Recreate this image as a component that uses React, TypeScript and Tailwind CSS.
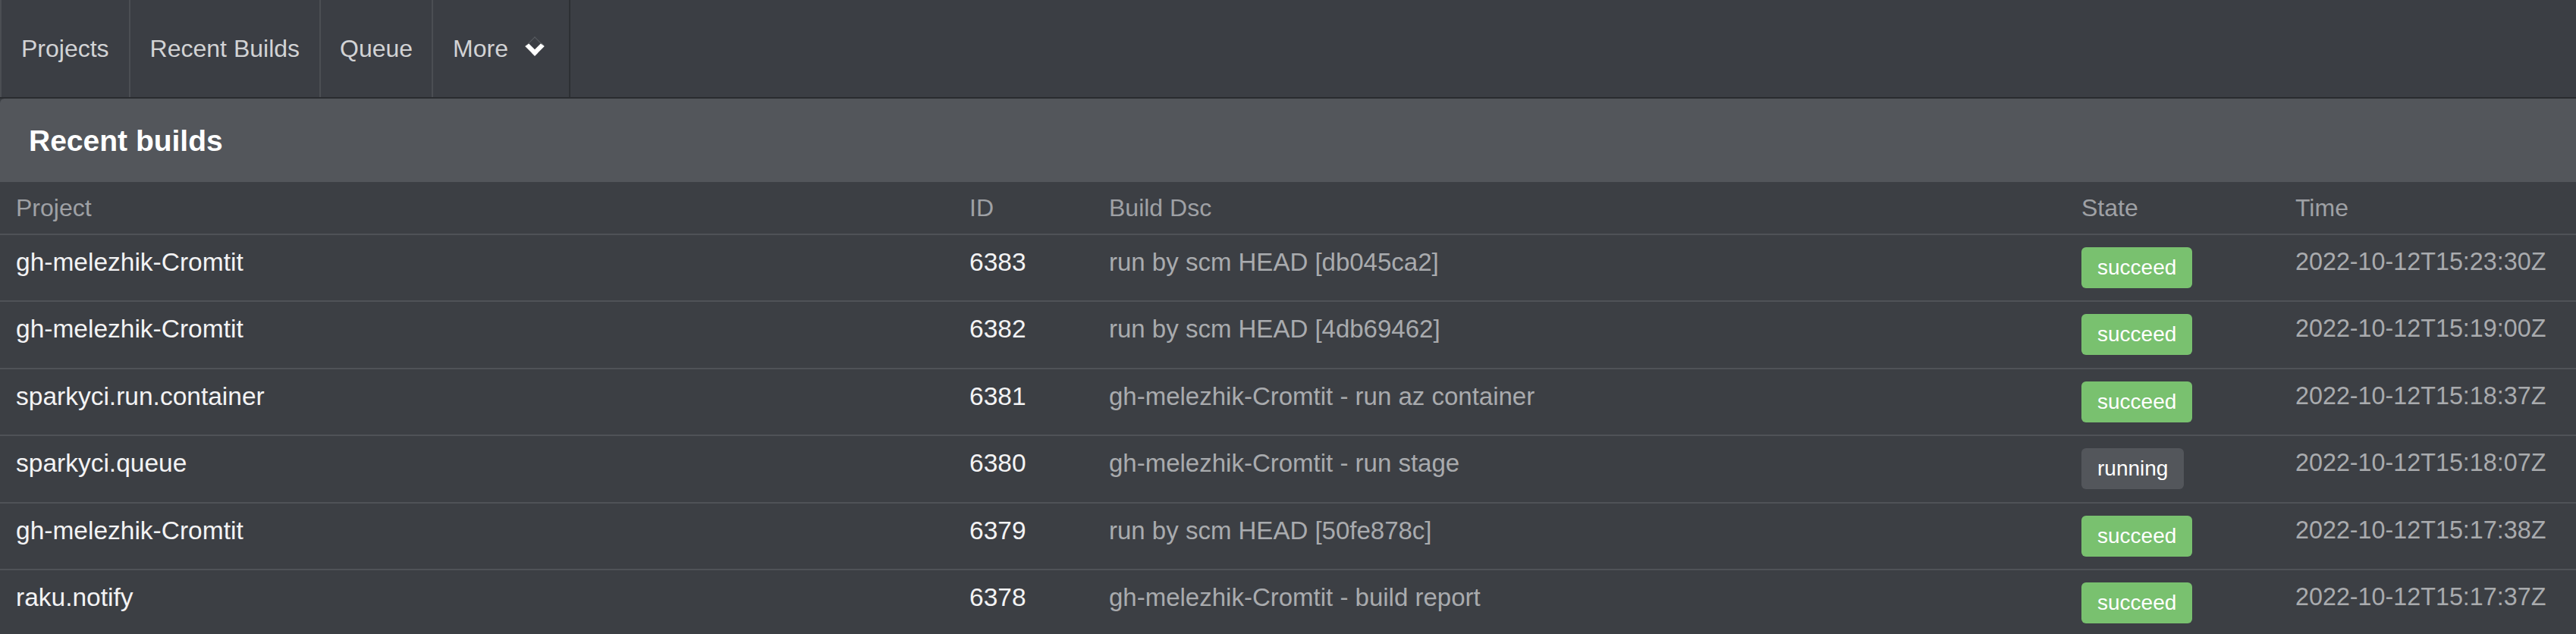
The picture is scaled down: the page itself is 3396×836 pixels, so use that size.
import React from 'react'

type Build = {
    project: string
    id: number
    dsc: string
    state: 'succeed' | 'running'
    time: string
}

const builds: Build[] = [
    { project: 'gh-melezhik-Cromtit', id: 6383, dsc: 'run by scm HEAD [db045ca2]', state: 'succeed', time: '2022-10-12T15:23:30Z' },
    { project: 'gh-melezhik-Cromtit', id: 6382, dsc: 'run by scm HEAD [4db69462]', state: 'succeed', time: '2022-10-12T15:19:00Z' },
    { project: 'sparkyci.run.container', id: 6381, dsc: 'gh-melezhik-Cromtit - run az container', state: 'succeed', time: '2022-10-12T15:18:37Z' },
    { project: 'sparkyci.queue', id: 6380, dsc: 'gh-melezhik-Cromtit - run stage', state: 'running', time: '2022-10-12T15:18:07Z' },
    { project: 'gh-melezhik-Cromtit', id: 6379, dsc: 'run by scm HEAD [50fe878c]', state: 'succeed', time: '2022-10-12T15:17:38Z' },
    { project: 'raku.notify', id: 6378, dsc: 'gh-melezhik-Cromtit - build report', state: 'succeed', time: '2022-10-12T15:17:37Z' },
]

const cols = "grid grid-cols-[1257px_184px_1282px_282px_1fr]"

const NavItem = ({ label, px = "px-[26px]" }: { label: string; px?: string }) => (
    <a className={`flex items-center h-full ${px} border-l-2 border-[#4b4e53] text-[32px] text-[#d2d3d5] whitespace-nowrap`}>
        {label}
    </a>
)

export default function App() {
    return (
        <div className="min-h-screen bg-[#2b2d31] font-['Liberation_Sans',sans-serif]">
            {/* Navbar */}
            <nav className="flex h-[130px] bg-[#3b3e44] border-b-2 border-[#2a2c30]">
                <NavItem label="Projects" />
                <NavItem label="Recent Builds" />
                <NavItem label="Queue" px="px-[25px]" />
                <a className="flex items-center h-full pl-[26px] pr-[32px] border-l-2 border-r-2 border-l-[#4b4e53] border-r-[#2d3034] text-[32px] text-[#d2d3d5]">
                    More
                    <span className="ml-[22px] w-[26px] h-[26px] flex items-center justify-center">
                        <span className="block w-[18px] h-[18px] border-l-[6px] border-b-[6px] border-t border-r border-l-white border-b-white border-t-[#5a5d62] border-r-[#5a5d62] -rotate-45 -translate-y-[3px]" />
                    </span>
                </a>
            </nav>

            {/* Panel */}
            <div className="bg-[#3c3f44]">
                <div className="h-[110px] flex items-center pl-[38px] pt-[3px] bg-[#53565b] rounded-tl-[6px] text-[39px] font-bold text-white">
                    Recent builds
                </div>

                {/* Table head */}
                <div className={`${cols} h-[69.5px] border-b-2 border-[#4f5257] items-center text-[32px] text-[#9fa1a5]`}>
                    <div className="pl-[21px]">Project</div>
                    <div className="pl-[21px]">ID</div>
                    <div className="pl-[21px]">Build Dsc</div>
                    <div className="pl-[21px]">State</div>
                    <div className="pl-[21px]">Time</div>
                </div>

                {/* Rows */}
                {builds.map((b) => (
                    <div key={b.id} className={`${cols} h-[88.5px] border-b-2 border-[#4f5257] text-[33.5px] leading-[51px]`}>
                        <div className="pl-[21px] pt-[10px] text-[#f3f3f4] whitespace-nowrap">{b.project}</div>
                        <div className="pl-[21px] pt-[10px] text-[#f3f3f4]">{b.id}</div>
                        <div className="pl-[21px] pt-[10px] text-[33px] text-[#a9abae] whitespace-nowrap">{b.dsc}</div>
                        <div className="pl-[21px] flex items-center">
                            <span
                                className={`h-[54px] px-[21px] flex items-center rounded-[6px] text-[28px] leading-none text-white ${b.state === 'succeed' ? 'bg-[#79c16f]' : 'bg-[#53565b]'}`}
                            >
                                {b.state}
                            </span>
                        </div>
                        <div className="pl-[21px] pt-[10px] text-[32.3px] text-[#a9abae] whitespace-nowrap">{b.time}</div>
                    </div>
                ))}
            </div>
        </div>
    )
}
